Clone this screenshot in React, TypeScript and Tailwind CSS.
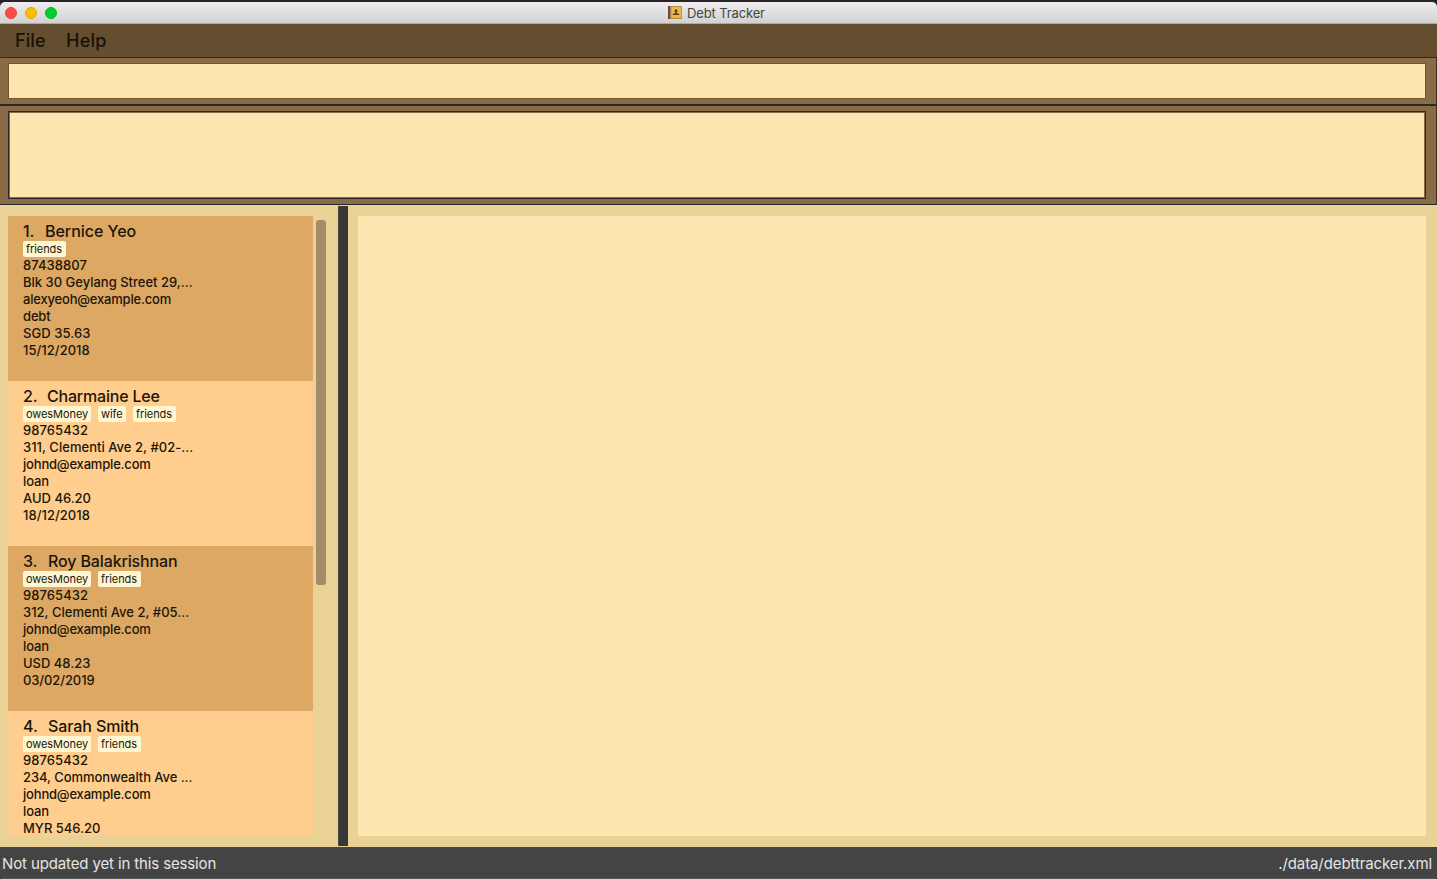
type Person = {
  id: number;
  name: string;
  gap: string;
  nameTracking: string;
  tags: string[];
  phone: string;
  address: string;
  addressTracking: string;
  email: string;
  kind: string;
  amount: string;
  date: string;
};

const people: Person[] = [
  { id: 1, name: "Bernice Yeo", gap: "w-[22px]", nameTracking: "tracking-[-0.05px]", tags: ["friends"], phone: "87438807", address: "Blk 30 Geylang Street 29,...", addressTracking: "tracking-[0px]", email: "alexyeoh@example.com", kind: "debt", amount: "SGD 35.63", date: "15/12/2018" },
  { id: 2, name: "Charmaine Lee", gap: "w-[24px]", nameTracking: "tracking-[-0.2px]", tags: ["owesMoney", "wife", "friends"], phone: "98765432", address: "311, Clementi Ave 2, #02-...", addressTracking: "tracking-[0.03px]", email: "johnd@example.com", kind: "loan", amount: "AUD 46.20", date: "18/12/2018" },
  { id: 3, name: "Roy Balakrishnan", gap: "w-[25px]", nameTracking: "tracking-[-0.13px]", tags: ["owesMoney", "friends"], phone: "98765432", address: "312, Clementi Ave 2, #05...", addressTracking: "tracking-[0.02px]", email: "johnd@example.com", kind: "loan", amount: "USD 48.23", date: "03/02/2019" },
  { id: 4, name: "Sarah Smith", gap: "w-[25px]", nameTracking: "tracking-[-0.1px]", tags: ["owesMoney", "friends"], phone: "98765432", address: "234, Commonwealth Ave ...", addressTracking: "tracking-[-0.07px]", email: "johnd@example.com", kind: "loan", amount: "MYR 546.20", date: "" },
];

const tagWidths: Record<string, string> = {
  friends: "w-[43px]",
  owesMoney: "w-[68px]",
  wife: "w-[28px]",
};

function BookIcon() {
  return (
    <svg width="14" height="13" viewBox="0 0 14 13">
      <rect width="14" height="13" rx="0.7" fill="#b8893a" />
      <rect width="2.6" height="13" fill="#6b4c42" />
      <rect x="2.6" width="0.7" height="13" fill="#d7b578" />
      <rect x="3.5" y="0.8" width="9.7" height="11" fill="#ecb84f" />
      <circle cx="8" cy="4.8" r="1.5" fill="#5b4020" />
      <path d="M7.3 5.5h1.4v1.5l2.6 0.9v1.2H4.7V7.9l2.6-.9z" fill="#5b4020" />
    </svg>
  );
}

function Card({ person }: { person: Person }) {
  const odd = person.id % 2 === 1;
  return (
    <article className={`h-[165px] shrink-0 pl-[15px] pt-[5px] text-[#1c1609] ${odd ? "bg-[#dca864]" : "bg-[#ffcd8d]"}`}>
      <h2 className={`flex h-5 items-center whitespace-nowrap text-[16px] font-medium ${person.nameTracking}`}>
        <span className={person.gap}>{person.id}.</span>
        <span>{person.name}</span>
      </h2>
      <div className="flex h-4 gap-[7px]">
        {person.tags.map((tag) => (
          <span key={tag} className={`h-4 whitespace-nowrap rounded-[2px] bg-[#fff6d3] pl-[3px] text-[11px] leading-[17px] tracking-[-0.08px] ${tagWidths[tag]}`}>{tag}</span>
        ))}
      </div>
      <div className="whitespace-nowrap text-[13px] font-medium leading-[17px]">
        <p className="tracking-[0.07px]">{person.phone}</p>
        <p className={person.addressTracking}>{person.address}</p>
        <p className="tracking-[-0.19px]">{person.email}</p>
        <p className="tracking-[-0.15px]">{person.kind}</p>
        <p className={person.id === 1 ? "tracking-[0.08px]" : "tracking-[-0.01px]"}>{person.amount}</p>
        <p className={person.id === 3 ? "tracking-[-0.1px]" : "tracking-[0.03px]"}>{person.date}</p>
      </div>
    </article>
  );
}

export default function App() {
  return (
    <div className="flex h-[879px] w-[1437px] flex-col overflow-hidden bg-[#2b2025] font-['Inter',sans-serif]">
      <header className="mt-[2px] flex h-[22px] shrink-0 items-center rounded-t-[5px] border-b border-[#aaa] bg-linear-to-b from-[#eeeeee] to-[#d2d2d2]">
        <div className="flex w-[668px] gap-2 pl-[5px]">
          <span className="size-3 rounded-full border border-[#e2443f] bg-[#ff4b47]" />
          <span className="size-3 rounded-full border border-[#e2a500] bg-[#ffbd00]" />
          <span className="size-3 rounded-full border border-[#00b922] bg-[#00d02b]" />
        </div>
        <BookIcon />
        <span className="ml-[5px] whitespace-nowrap text-[13px] leading-[18px] tracking-[-0.13px] text-[#454545]">Debt Tracker</span>
      </header>
      <nav className="flex h-[34px] shrink-0 items-center border-b border-[#2d2925] bg-[#644e2f] pl-[15px] text-[18px] font-medium text-[#17120a]">
        <span className="w-[51px] tracking-[0.1px]">File</span>
        <span className="tracking-[0.25px]">Help</span>
      </nav>
      <section className="h-[48px] shrink-0 border-b-2 border-r border-b-[#2a2a2a] border-r-[#3b2f23] bg-[#896b46] pl-2 pr-[10px] pt-[5px]">
        <div className="h-9 border border-[#73562f] bg-[#fee6b1]" />
      </section>
      <section className="h-[99px] shrink-0 border-b border-r border-b-[#2a2a2a] border-r-[#3b2f23] bg-[#896b46] pl-2 pr-[10px] pt-[5px]">
        <div className="h-[88px] border border-[#2a2a2a]">
          <div className="h-full border border-[#896b46] bg-[#fee6b1]" />
        </div>
      </section>
      <main className="flex h-[642px] shrink-0 bg-[#ead196]">
        <aside className="flex w-[338px] py-[11px] pl-2">
          <div className="flex h-[620px] w-[305px] flex-col overflow-hidden">
            {people.map((person) => <Card key={person.id} person={person} />)}
          </div>
          <div className="ml-[3px] mt-1 h-[365px] w-[10px] rounded-[3px] bg-[#a58c69]" />
        </aside>
        <div className="mt-px h-[640px] w-[10px] border-l border-[#4c4c48] bg-[#383838]" />
        <div className="flex-1 py-[11px] pl-[10px] pr-[11px]">
          <div className="h-[620px] bg-[#fee6b1]" />
        </div>
      </main>
      <footer className="flex h-8 shrink-0 items-center justify-between rounded-b-[3px] border-b border-[#585858] bg-[#444444] pl-[2px] pr-[5px] pt-[4px] text-[15px] text-[#e5e5e5]">
        <span className="tracking-[-0.13px]">Not updated yet in this session</span>
        <span className="tracking-[-0.1px]">./data/debttracker.xml</span>
      </footer>
    </div>
  );
}
